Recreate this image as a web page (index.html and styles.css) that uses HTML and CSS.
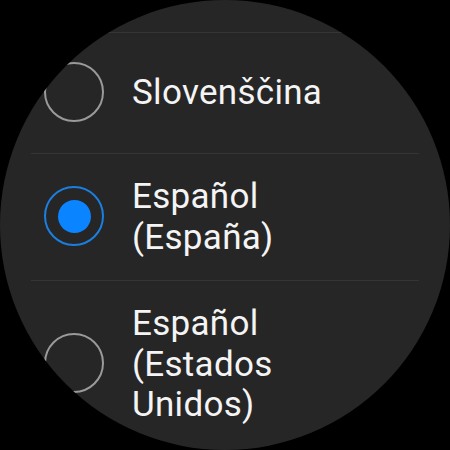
FILE: index.html
```html
<!DOCTYPE html>
<html lang="es">
<head>
<meta charset="utf-8">
<link rel="stylesheet" href="styles.css">
</head>
<body>
<div class="watch">
  <div class="list">
    <div class="row">
      <span class="radio"></span>
      <span class="label">Slovenščina</span>
    </div>
    <div class="row">
      <span class="radio checked"></span>
      <span class="label">Español (España)</span>
    </div>
    <div class="row">
      <span class="radio"></span>
      <span class="label">Español (Estados Unidos)</span>
    </div>
  </div>
</div>
</body>
</html>
```
FILE: styles.css
```css
html, body {
  margin: 0;
  padding: 0;
  background: #000;
}
.watch {
  width: 450px;
  height: 450px;
  border-radius: 50%;
  background: #262626;
  overflow: hidden;
}
.list {
  display: flex;
  flex-direction: column;
  padding: 32px 31px 0;
}
.row {
  box-sizing: border-box;
  display: flex;
  align-items: center;
  gap: 28px;
  min-height: 121px;
  padding: 20px 0 22px 13px;
  border-top: 1px solid #353535;
}
.radio {
  box-sizing: border-box;
  flex-shrink: 0;
  width: 60px;
  height: 60px;
  border: 2px solid #9a9a9a;
  border-radius: 50%;
  display: flex;
  align-items: center;
  justify-content: center;
}
.radio.checked {
  border-color: #1a7fe0;
}
.radio.checked::after {
  content: "";
  width: 33px;
  height: 33px;
  border-radius: 50%;
  background: #0a84ff;
}
.label {
  font-family: Roboto, "Noto Sans", sans-serif;
  font-size: 35px;
  letter-spacing: 0.3px;
  line-height: 40.5px;
  padding-top: 3px;
  color: #f4f4f4;
  max-width: 215px;
}
```
